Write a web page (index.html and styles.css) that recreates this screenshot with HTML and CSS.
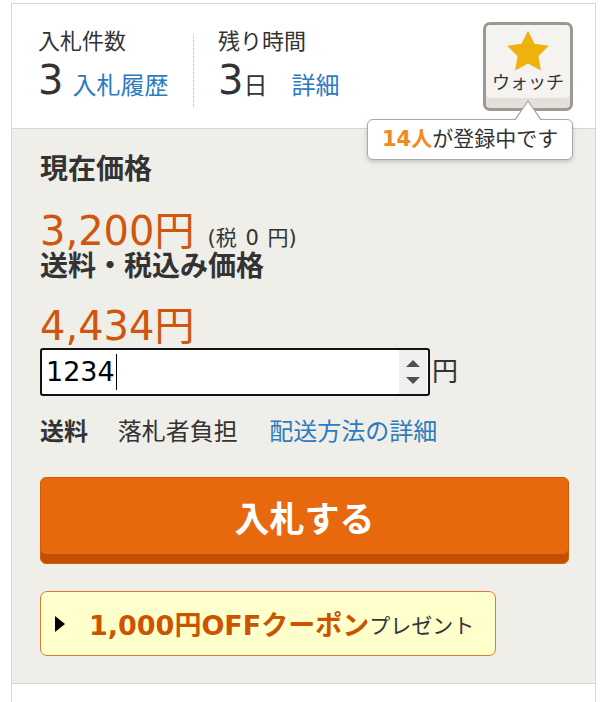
FILE: index.html
```html
<!DOCTYPE html>
<html lang="ja">
<head>
<meta charset="utf-8">
<link rel="stylesheet" href="styles.css">
</head>
<body>
<div class="panel">
  <div class="head">
    <div class="stat stat-bids">
      <div class="stat-label">入札件数</div>
      <div class="stat-value"><span class="num">3</span><a class="link gap">入札履歴</a></div>
    </div>
    <div class="stat stat-time">
      <div class="stat-label">残り時間</div>
      <div class="stat-value"><span class="num">3</span><span class="unit">日</span><a class="link gap-lg">詳細</a></div>
    </div>
    <div class="watch">
      <button class="watch-btn">
        <svg class="star" width="46" height="43" viewBox="1 1.3 22 20.4"><polygon points="12,2 15.09,8.26 22,9.27 17,14.14 18.18,21.02 12,17.77 5.82,21.02 7,14.14 2,9.27 8.91,8.26" fill="#efb20c"/></svg>
        <span class="watch-text">ウォッチ</span>
      </button>
      <div class="tip"><b class="tip-count">14人</b>が登録中です</div>
    </div>
  </div>
  <div class="main">
    <div class="heading">現在価格</div>
    <div class="price price-current">3,200円<span class="tax">(税 0 円)</span></div>
    <div class="heading heading-total">送料・税込み価格</div>
    <div class="price price-total">4,434円</div>
    <div class="bid-row">
      <div class="bid-input">
        <span class="bid-val">1234</span><span class="caret"></span>
        <span class="spin"><span class="spin-up"></span><span class="spin-down"></span></span>
      </div>
      <span class="yen">円</span>
    </div>
    <div class="ship">
      <span class="ship-label">送料</span>
      <span class="ship-val">落札者負担</span>
      <a class="link ship-link">配送方法の詳細</a>
    </div>
    <button class="bid-btn">入札する</button>
    <div class="coupon">
      <span class="tri"></span>
      <span class="coupon-strong">1,000円OFFクーポン</span><span class="coupon-sub">プレゼント</span>
    </div>
  </div>
</div>
</body>
</html>
```

FILE: styles.css
```css
* { box-sizing: border-box; }
html, body { margin: 0; padding: 0; background: #fff; }
body {
  font-family: "DejaVu Sans", "Noto Sans CJK JP", sans-serif;
  color: #333;
}
.panel {
  margin: 3px 0 0 11px;
  width: 585px;
  min-height: 699px;
  border: 1px solid #d6d6d6;
  border-bottom: none;
}
.head {
  display: flex;
  align-items: flex-start;
  height: 125px;
  padding: 18px 0 0 26px;
  border-bottom: 1px solid #d6d6d6;
}
.stat { margin-top: 12px; }
.stat-bids { width: 155px; }
.stat-time {
  height: 73px;
  padding-left: 24px;
  border-left: 1px dotted #b8b8b8;
}
.stat-label {
  height: 16px;
  font-size: 22px;
  line-height: 16px;
  color: #333;
}
.stat-value {
  height: 40px;
  margin-top: 10px;
  font-size: 40px;
  line-height: 40px;
  white-space: nowrap;
}
.num { color: #333; }
.unit { font-size: 24px; line-height: 24px; color: #333; }
.link { color: #2b7bbf; text-decoration: none; font-size: 24px; line-height: 24px; }
.gap { margin-left: 9px; }
.gap-lg { margin-left: 24px; }

.watch {
  position: relative;
  margin-left: auto;
  margin-right: 22px;
}
.watch-btn {
  display: flex;
  flex-direction: column;
  align-items: center;
  width: 90px;
  height: 89px;
  padding: 4px 0 0;
  border: 3px solid #9c9990;
  border-radius: 7px;
  background: #f4f3ef;
  box-shadow: inset 0 -10px 0 #e2e0d8;
  font-family: inherit;
}
.star { display: block; }
.watch-text {
  font-size: 18px;
  line-height: 22px;
  color: #333;
}
.tip {
  position: absolute;
  top: 97px;
  left: -116px;
  width: 206px;
  height: 41px;
  background: #fff;
  border: 1px solid #a9a9a9;
  border-radius: 6px;
  box-shadow: 0 2px 4px rgba(0,0,0,0.18);
  font-size: 21px;
  line-height: 39px;
  padding-left: 14px;
  color: #333;
  white-space: nowrap;
  z-index: 2;
}
.tip::before, .tip::after {
  content: "";
  position: absolute;
  left: 146px;
  width: 0;
  height: 0;
  border-style: solid;
}
.tip::before {
  top: -20px;
  border-width: 0 14px 20px 14px;
  border-color: transparent transparent #a9a9a9 transparent;
}
.tip::after {
  top: -18px;
  left: 147px;
  border-width: 0 13px 19px 13px;
  border-color: transparent transparent #fff transparent;
}
.tip-count { color: #f08a22; font-weight: bold; }

.main {
  background: #efeee8;
  border-bottom: 1px solid #d6d6d6;
  padding: 27px 28px 27px;
}
.heading {
  height: 28px;
  font-size: 28px;
  line-height: 28px;
  font-weight: bold;
  color: #333;
}
.heading-total { margin-top: 2px; }
.price {
  height: 40px;
  font-size: 40px;
  line-height: 40px;
  color: #cf560c;
  white-space: nowrap;
}
.price-current { margin-top: 27px; }
.price-total { margin-top: 25px; }
.tax {
  font-size: 21px;
  line-height: 21px;
  color: #333;
  margin-left: 13px;
  word-spacing: 2px;
}
.bid-row {
  display: flex;
  align-items: center;
  height: 48px;
  margin-top: 2px;
}
.bid-input {
  display: flex;
  align-items: center;
  width: 390px;
  height: 48px;
  border: 2px solid #111;
  border-radius: 3px;
  background: #fff;
  padding-left: 4px;
}
.bid-val {
  font-size: 27px;
  line-height: 44px;
  color: #000;
}
.caret {
  width: 1px;
  height: 36px;
  background: #000;
  margin-left: 1px;
}
.spin {
  margin-left: auto;
  width: 28px;
  height: 44px;
  background: #efefef;
  display: flex;
  flex-direction: column;
  align-items: center;
  justify-content: center;
  gap: 10px;
  margin-right: 1px;
}
.spin-up, .spin-down {
  width: 0; height: 0;
  border-left: 7px solid transparent;
  border-right: 7px solid transparent;
}
.spin-up { border-bottom: 7px solid #505050; }
.spin-down { border-top: 7px solid #505050; }
.yen {
  font-size: 26px;
  line-height: 26px;
  margin-left: 2px;
  color: #333;
}
.ship {
  height: 25px;
  margin-top: 24px;
  font-size: 24px;
  line-height: 25px;
  white-space: nowrap;
}
.ship-label { font-weight: bold; color: #333; }
.ship-val { margin-left: 22px; color: #333; }
.ship-link { font-size: 24px; line-height: 25px; margin-left: 24px; }
.bid-btn {
  display: block;
  width: 529px;
  height: 87px;
  margin-top: 32px;
  border: 1px solid #d25c06;
  border-radius: 6px;
  background: #e8690d;
  box-shadow: inset 0 -9px 0 #c54f00;
  color: #fff;
  font-family: inherit;
  font-size: 35px;
  font-weight: bold;
  padding: 0 0 8px;
}
.coupon {
  display: flex;
  align-items: center;
  width: 456px;
  height: 65px;
  margin-top: 27px;
  background: #ffffcc;
  border: 1px solid #e07a30;
  border-radius: 7px;
  padding-left: 14px;
  white-space: nowrap;
}
.tri {
  width: 0; height: 0;
  border-top: 8px solid transparent;
  border-bottom: 8px solid transparent;
  border-left: 10px solid #000;
  margin-right: 24px;
}
.coupon-strong {
  font-size: 27px;
  font-weight: bold;
  color: #cc5300;
}
.coupon-sub {
  font-size: 21px;
  color: #333;
}
```
